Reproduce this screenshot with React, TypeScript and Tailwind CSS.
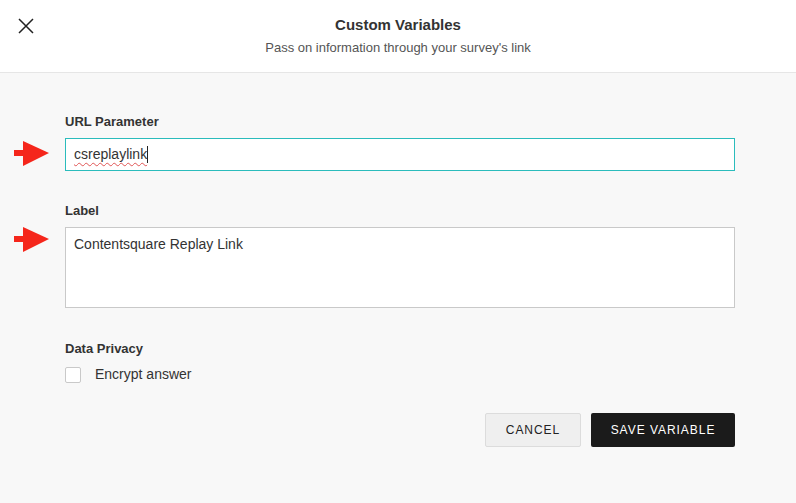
import React from "react";

function RedArrow() {
  return (
    <svg width="38" height="28" viewBox="0 0 38 28" className="shrink-0">
      <rect x="1" y="10" width="14" height="6" fill="#f5261b" />
      <polygon points="10,1 36,13 10,26" fill="#f5261b" />
    </svg>
  );
}

export default function App() {
  return (
    <div
      className="w-[796px] h-[503px] bg-[#f8f8f8] text-[#333] overflow-hidden"
      style={{ fontFamily: '"Liberation Sans", Arial, sans-serif' }}
    >
      <header className="relative h-[73px] bg-white border-b border-[#e6e6e6] flex flex-col items-center pt-[15px]">
        <button className="absolute left-[18px] top-[18px] w-[16px] h-[16px] text-[#222]">
          <svg width="16" height="16" viewBox="0 0 16 16" fill="none" stroke="currentColor" strokeWidth="1.5">
            <path d="M1 1 L15 15 M15 1 L1 15" />
          </svg>
        </button>
        <h1 className="text-[15px] font-bold text-[#333] leading-[20px]">Custom Variables</h1>
        <p className="text-[13px] text-[#555] leading-[16px] mt-[5px]">
          Pass on information through your survey's link
        </p>
      </header>

      <main className="pl-[65px] pr-[61px] pt-[41px]">
        <label className="block text-[13px] font-bold leading-[16px] text-[#333]">URL Parameter</label>
        <div className="relative mt-[8px]">
          <div className="absolute left-[-52px] top-[2px]">
            <RedArrow />
          </div>
          <div className="h-[33px] bg-white border border-[#2bbcbc] flex items-center px-[8px] text-[14px] text-[#333]">
            <span className="underline decoration-wavy decoration-[#e05555] decoration-1 underline-offset-[3px]">
              csreplaylink
            </span>
            <span className="inline-block w-[1px] h-[17px] bg-[#222]" />
          </div>
        </div>

        <label className="block mt-[32px] text-[13px] font-bold leading-[16px] text-[#333]">Label</label>
        <div className="relative mt-[8px]">
          <div className="absolute left-[-52px] top-[-1px]">
            <RedArrow />
          </div>
          <div className="h-[81px] bg-white border border-[#c9c9c9] px-[8px] pt-[7px] text-[14px] leading-[18px] text-[#333]">
            Contentsquare Replay Link
          </div>
        </div>

        <div className="mt-[33px] text-[13px] font-bold leading-[16px] text-[#333]">Data Privacy</div>
        <label className="mt-[7px] flex items-center gap-[14px] text-[14px] text-[#333]">
          <span className="w-[16px] h-[16px] bg-white border border-[#c9c9c9] rounded-[2px]" />
          Encrypt answer
        </label>

        <div className="mt-[28px] flex justify-end gap-[10px]">
          <button className="w-[96px] h-[34px] bg-[#efefef] border border-[#dcdcdc] rounded-[2px] text-[12px] tracking-[0.08em] text-[#222]">
            CANCEL
          </button>
          <button className="w-[144px] h-[34px] bg-[#1b1b1b] rounded-[2px] text-[12px] tracking-[0.08em] text-white font-medium">
            SAVE VARIABLE
          </button>
        </div>
      </main>
    </div>
  );
}
